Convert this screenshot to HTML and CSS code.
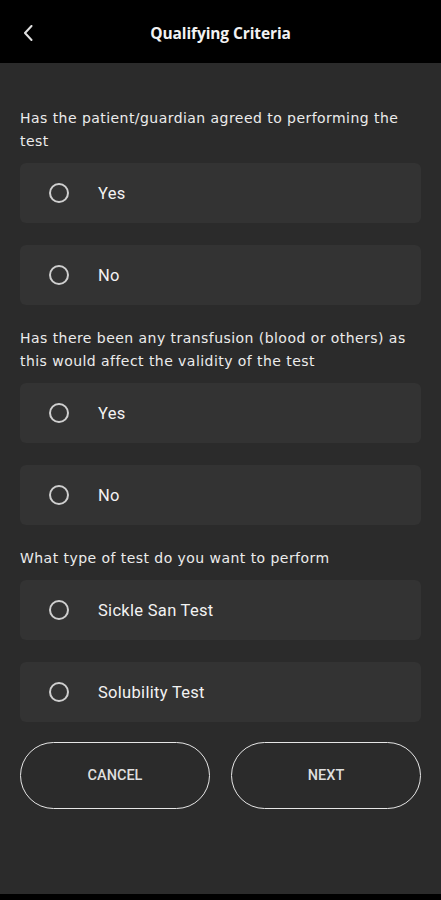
FILE: index.html
```html
<!DOCTYPE html>
<html lang="en">
<head>
<meta charset="utf-8">
<title>Qualifying Criteria</title>
<link rel="stylesheet" href="styles.css">
</head>
<body>
<div class="screen">
  <header class="topbar">
    <button class="back" aria-label="Back">
      <svg width="12" height="16" viewBox="0 0 12 16"><path d="M9.5 1 L3 8 L9.5 15" fill="none" stroke="#e0e0e0" stroke-width="2" stroke-linecap="round" stroke-linejoin="round"/></svg>
    </button>
    <h1 class="title">Qualifying Criteria</h1>
  </header>
  <main class="content">
    <section class="group">
      <p class="question">Has the patient/guardian agreed to performing the test</p>
      <label class="option"><span class="radio"></span><span class="label">Yes</span></label>
      <label class="option"><span class="radio"></span><span class="label">No</span></label>
    </section>
    <section class="group">
      <p class="question">Has there been any transfusion (blood or others) as this would affect the validity of the test</p>
      <label class="option"><span class="radio"></span><span class="label">Yes</span></label>
      <label class="option"><span class="radio"></span><span class="label">No</span></label>
    </section>
    <section class="group">
      <p class="question">What type of test do you want to perform</p>
      <label class="option"><span class="radio"></span><span class="label">Sickle San Test</span></label>
      <label class="option"><span class="radio"></span><span class="label">Solubility Test</span></label>
    </section>
    <div class="actions">
      <button class="btn">CANCEL</button>
      <button class="btn">NEXT</button>
    </div>
  </main>
  <div class="navbar"></div>
</div>
</body>
</html>
```
FILE: styles.css
```css
* { box-sizing: border-box; }
html, body { margin: 0; padding: 0; }
body {
  background: #2b2b2b;
  font-family: "DejaVu Sans", "Open Sans", sans-serif;
  color: #f0f0f0;
}
.screen {
  width: 441px;
  height: 900px;
  display: flex;
  flex-direction: column;
  background: #2b2b2b;
}
.topbar {
  height: 63px;
  background: #000;
  position: relative;
  display: flex;
  align-items: center;
  justify-content: center;
}
.back {
  position: absolute;
  left: 22px;
  top: 25px;
  width: 12px;
  height: 16px;
  padding: 0;
  border: 0;
  background: none;
  display: flex;
}
.title {
  margin: 0;
  font-family: "Open Sans", sans-serif;
  font-weight: 700;
  font-size: 15.5px;
  letter-spacing: -0.1px;
  color: #f2f2f2;
  padding-top: 3px;
}
.content {
  flex: 1;
  padding: 44px 20px 0 20px;
  display: flex;
  flex-direction: column;
}
.group {
  display: flex;
  flex-direction: column;
  gap: 22px;
  margin-bottom: 22px;
}
.question {
  margin: 0 0 -12px;
  font-size: 14px;
  line-height: 23px;
  color: #ececec;
  letter-spacing: 0.45px;
}
.option {
  height: 60px;
  background: #333333;
  border-radius: 6px;
  display: flex;
  align-items: center;
  padding-left: 29px;
}
.radio {
  width: 20px;
  height: 20px;
  border: 2px solid #cfcfcf;
  border-radius: 50%;
  flex: none;
}
.label {
  margin-left: 29px;
  font-family: Roboto, sans-serif;
  font-size: 16.5px;
  letter-spacing: 0.3px;
  color: #f2f2f2;
}
.actions {
  display: grid;
  grid-template-columns: 1fr 1fr;
  gap: 21px;
  margin-top: -2px;
}
.btn {
  height: 67px;
  border: 1.5px solid #e6e6e6;
  border-radius: 34px;
  background: transparent;
  color: #dedede;
  font-family: Roboto, sans-serif;
  font-weight: 500;
  font-size: 14.5px;
}
.navbar {
  height: 6px;
  background: #000;
}
```
